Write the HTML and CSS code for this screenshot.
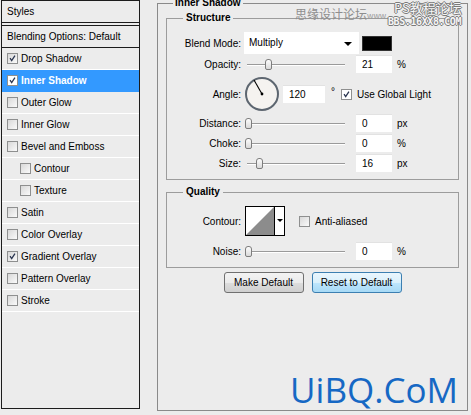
FILE: index.html
```html
<!DOCTYPE html>
<html lang="en">
<head>
    <meta charset="UTF-8">
    <title>Layer Style - Inner Shadow</title>
    <link rel="stylesheet" href="styles.css">
</head>
<body>
    <div class="dialog">
        <div class="styles">
            <div class="head">Styles</div>
            <div class="blend">Blending Options: Default</div>
            <ul class="list">
                <li><span class="cb on"><svg viewBox="0 0 11 11"><path d="M2.5 5 L4.5 8 L8.5 2"/></svg></span>Drop Shadow</li>
                <li class="sel"><span class="cb on"><svg viewBox="0 0 11 11"><path d="M2.5 5 L4.5 8 L8.5 2"/></svg></span>Inner Shadow</li>
                <li><span class="cb"></span>Outer Glow</li>
                <li><span class="cb"></span>Inner Glow</li>
                <li><span class="cb"></span>Bevel and Emboss</li>
                <li class="sub"><span class="cb"></span>Contour</li>
                <li class="sub"><span class="cb"></span>Texture</li>
                <li><span class="cb"></span>Satin</li>
                <li><span class="cb"></span>Color Overlay</li>
                <li><span class="cb on"><svg viewBox="0 0 11 11"><path d="M2.5 5 L4.5 8 L8.5 2"/></svg></span>Gradient Overlay</li>
                <li><span class="cb"></span>Pattern Overlay</li>
                <li><span class="cb"></span>Stroke</li>
            </ul>
        </div>

        <fieldset class="panel">
            <legend>Inner Shadow</legend>

            <fieldset class="group">
                <legend>Structure</legend>
                <div class="row row-blend">
                    <label>Blend Mode:</label>
                    <div class="select">Multiply</div>
                    <span class="swatch"></span>
                </div>
                <div class="row row-opacity">
                    <label>Opacity:</label>
                    <div class="slider"><span class="thumb" style="left:20px"></span></div>
                    <div class="num">21</div>
                    <span class="unit">%</span>
                </div>
                <div class="row row-angle">
                    <label>Angle:</label>
                    <svg class="dial" width="34" height="34" viewBox="0 0 34 34">
                        <circle cx="17" cy="17" r="16" fill="#f5f3f0" stroke="#5d6670" stroke-width="2"/>
                        <line x1="17" y1="17" x2="9" y2="3" stroke="#000" stroke-width="1.1"/>
                        <circle cx="17" cy="17" r="1.4" fill="#000"/>
                    </svg>
                    <div class="num wide">120</div>
                    <span class="deg">°</span>
                    <span class="cb on"><svg viewBox="0 0 11 11"><path d="M2.5 5 L4.5 8 L8.5 2"/></svg></span>
                    <span class="check-label">Use Global Light</span>
                </div>
                <div class="row row-step">
                    <label>Distance:</label>
                    <div class="slider"><span class="thumb" style="left:0px"></span></div>
                    <div class="num">0</div>
                    <span class="unit">px</span>
                </div>
                <div class="row row-step">
                    <label>Choke:</label>
                    <div class="slider"><span class="thumb" style="left:0px"></span></div>
                    <div class="num">0</div>
                    <span class="unit">%</span>
                </div>
                <div class="row row-step">
                    <label>Size:</label>
                    <div class="slider"><span class="thumb" style="left:11px"></span></div>
                    <div class="num">16</div>
                    <span class="unit">px</span>
                </div>
            </fieldset>

            <fieldset class="group quality">
                <legend>Quality</legend>
                <div class="row row-contour">
                    <label>Contour:</label>
                    <svg class="contour" width="40" height="30" viewBox="0 0 40 30">
                        <rect x="0.5" y="0.5" width="39" height="29" fill="#fff" stroke="#000"/>
                        <polygon points="1,29 29,1 29,29" fill="#8c8c8c"/>
                        <line x1="29.5" y1="0" x2="29.5" y2="30" stroke="#000"/>
                        <polygon points="32,13 38,13 35,16" fill="#000"/>
                    </svg>
                    <span class="cb aa"></span>
                    <span class="check-label">Anti-aliased</span>
                </div>
                <div class="row row-noise">
                    <label>Noise:</label>
                    <div class="slider"><span class="thumb" style="left:0px"></span></div>
                    <div class="num">0</div>
                    <span class="unit">%</span>
                </div>
            </fieldset>

            <div class="buttons">
                <button class="btn">Make Default</button>
                <button class="btn btn-def">Reset to Default</button>
            </div>

            <div class="brand">UiBQ.CoM</div>
        </fieldset>

        <!-- 水印 -->
        <div class="wm wm-a">思缘设计论坛<small>www.</small></div>
        <div class="wm wm-b">PS教程论坛</div>
        <div class="wm wm-c">BBS.16XX8.COM</div>
    </div>
</body>
</html>
```

FILE: styles.css
```css
*{
    margin: 0;
    padding: 0;
    list-style: none;
    box-sizing: border-box;
}
body{
    background: #ececec;
    font: 10px "Liberation Sans", Arial, sans-serif;
    color: #000;
}
.dialog{
    position: relative;
    display: flex;
    align-items: flex-start;
    gap: 17px;
    height: 415px;
    padding-left: 1px;
    overflow: hidden;
}

/* left list */
.styles{
    flex: none;
    width: 139px;
    height: 409px;
    border: 1px solid #1c1c1c;
    background: #ececec;
}
.head{
    height: 22px;
    line-height: 21px;
    padding-left: 5px;
    border-bottom: 1px solid #1c1c1c;
    margin-bottom: 2px;
}
.blend{
    height: 23px;
    line-height: 21px;
    padding-left: 5px;
    border-top: 1px solid #1c1c1c;
    border-bottom: 1px solid #1c1c1c;
}
.list li{
    display: flex;
    align-items: center;
    height: 22px;
    padding-left: 5px;
    border-bottom: 1px solid #fff;
}
.list li.sub{
    padding-left: 18px;
}
.list li.sel{
    background: #3399ff;
    color: #fff;
    font-weight: bold;
    border-bottom-color: #3399ff;
}
.list .cb{
    margin-right: 3px;
}

/* checkbox */
.cb{
    flex: none;
    display: inline-block;
    width: 11px;
    height: 11px;
    border: 1px solid #8e8f8f;
    background: linear-gradient(135deg, #d8d8d8, #fafafa);
}
.cb svg{
    display: block;
    width: 9px;
    height: 9px;
}
.cb svg path{
    fill: none;
    stroke: #2a3550;
    stroke-width: 1.6;
}
.sel .cb{
    background: #fff;
}

/* right panel */
.panel{
    flex: none;
    width: 311px;
    height: 414px;
    margin-top: -3px;
    padding: 3px 8px 0;
    border: 1px solid #8a8a8a;
    min-width: 0;
    overflow: hidden;
}
.panel > legend{
    margin-left: 7px;
    padding: 0 2px;
    font-weight: bold;
    line-height: 12px;
}
.group{
    margin: 0;
    padding: 8px 0 7px;
    border: 1px solid #9c9c9c;
    min-width: 0;
}
.group > legend{
    margin-left: 16px;
    padding: 0 3px;
    font-weight: bold;
    line-height: 12px;
}
.quality{
    margin-top: 6px;
}

.row{
    display: flex;
    align-items: center;
    height: 18px;
}
.row label{
    flex: none;
    width: 74px;
    margin-right: 4px;
    text-align: right;
}
.row-blend{
    height: 22px;
}
.row-opacity{
    margin-top: 1px;
}
.row-angle{
    height: 34px;
    margin-top: 4px;
}
.row-step{
    margin-top: 2px;
}
.row-angle + .row-step{
    margin-top: 3px;
}
.row-contour{
    height: 30px;
}
.row-noise{
    margin-top: 6px;
}

.select{
    position: relative;
    width: 115px;
    height: 22px;
    line-height: 22px;
    margin-left: -1px;
    padding-left: 5px;
    background: #fff;
}
.select:after{
    content: "";
    position: absolute;
    right: 7px;
    top: 10px;
    border-left: 4px solid transparent;
    border-right: 4px solid transparent;
    border-top: 4px solid #000;
}
.swatch{
    width: 30px;
    height: 15px;
    margin-left: 3px;
    background: #000;
    border: 1px solid #333;
}

.slider{
    position: relative;
    flex: none;
    width: 100px;
    height: 18px;
}
.slider:before{
    content: "";
    position: absolute;
    left: 2px;
    right: 0;
    top: 9px;
    height: 1px;
    background: #9a9a9a;
    box-shadow: 0 1px 0 #fff;
}
.thumb{
    position: absolute;
    top: 4px;
    width: 7px;
    height: 11px;
    border: 1px solid #7d7d7d;
    border-radius: 3px 3px 2px 2px;
    background: linear-gradient(#fdfdfd, #d9d9d9);
}
.num{
    flex: none;
    width: 36px;
    height: 18px;
    line-height: 18px;
    margin-left: 11px;
    padding-left: 6px;
    background: #fff;
    border-top: 1px solid #e2e2e2;
}
.num.wide{
    width: 42px;
    margin-left: 4px;
}
.unit{
    margin-left: 5px;
}
.deg{
    margin-left: 6px;
    margin-top: -6px;
}
.row-angle .cb{
    margin-left: 6px;
    background: #fff;
}
.check-label{
    margin-left: 5px;
}
.dial{
    flex: none;
}
.contour{
    flex: none;
}
.cb.aa{
    margin-left: 14px;
}

/* buttons */
.buttons{
    display: flex;
    justify-content: center;
    gap: 8px;
    margin-top: 4px;
}
.btn{
    height: 21px;
    width: 80px;
    font: 10px "Liberation Sans", Arial, sans-serif;
    color: #000;
    border: 1px solid #707070;
    border-radius: 3px;
    background: linear-gradient(#f3f3f3 0%, #ebebeb 50%, #dddddd 51%, #cfcfcf 100%);
}
.btn-def{
    width: 90px;
    border-color: #3c7fb1;
    background: linear-gradient(#eaf6fd 0%, #d9f0fc 50%, #bee6fd 51%, #a7d9f5 100%);
}

.brand{
    margin-top: 80px;
    padding-right: 1px;
    text-align: right;
    font: 35px/34px "Open Sans", sans-serif;
    color: #1668c4;
}

/* watermark on top of the dialog */
.wm{
    position: absolute;
    white-space: nowrap;
    font-family: "Noto Sans CJK SC", sans-serif;
}
.wm-a{
    left: 295px;
    top: 6px;
    font-size: 12px;
    line-height: 16px;
    color: #8e8e8e;
}
.wm-a small{
    font-size: 8px;
    color: #999;
}
.wm-b{
    left: 394px;
    top: 1px;
    font-size: 13px;
    line-height: 14px;
    color: #f6f6f6;
    text-shadow: 1px 0 #7a7a7a, -1px 0 #7a7a7a, 0 1px #7a7a7a, 0 -1px #7a7a7a;
}
.wm-c{
    left: 388px;
    top: 15px;
    font: bold 10px/13px "DejaVu Sans Mono", monospace;
    letter-spacing: -0.4px;
    color: #f6f6f6;
    text-shadow: 1px 0 #7a7a7a, -1px 0 #7a7a7a, 0 1px #7a7a7a, 0 -1px #7a7a7a;
}
```
